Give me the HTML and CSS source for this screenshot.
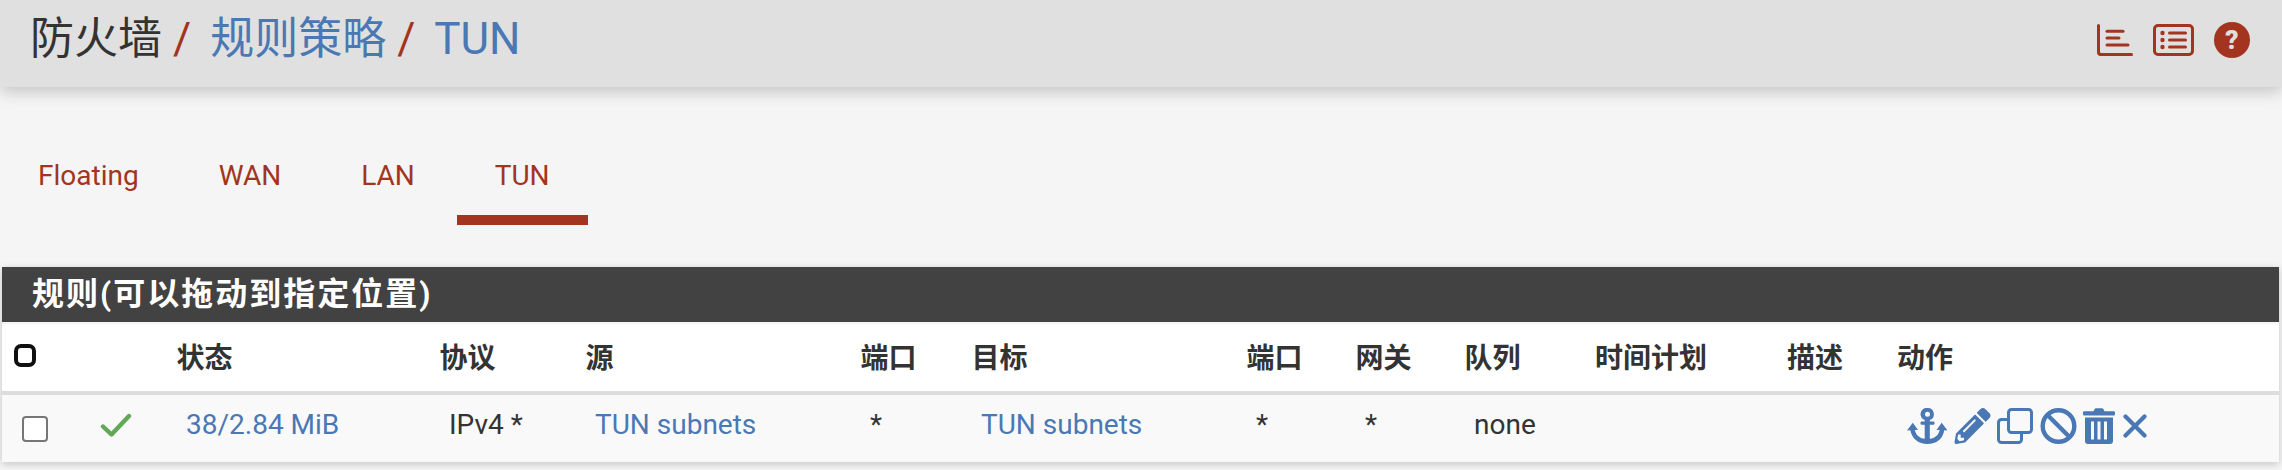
FILE: index.html
```html
<!DOCTYPE html>
<html lang="zh-CN">
<head>
<meta charset="utf-8">
<title>防火墙 / 规则策略 / TUN</title>
<link rel="stylesheet" href="styles.css">
</head>
<body>
<header class="topbar">
  <ol class="crumbs">
    <li class="crumb">防火墙<span class="sep">/</span></li>
    <li class="crumb"><a href="#">规则策略</a><span class="sep">/</span></li>
    <li class="crumb"><a href="#">TUN</a></li>
  </ol>
  <div class="tools">
    <svg class="tool-chart" viewBox="0 0 36 32"><g fill="none" stroke="#a23420" stroke-width="3" stroke-linecap="round"><path d="M1.500 1.500V28a2.600 2.600 0 0 0 2.600 2.600H34.500"/><path d="M10 7.300H26"/><path d="M10 14H22"/><path d="M10 21H31"/></g></svg>
    <svg class="tool-list" viewBox="0 0 41 32"><rect x="1.500" y="1.500" width="38" height="29" rx="3.500" fill="none" stroke="#a23420" stroke-width="3"/><g fill="#a23420"><circle cx="9.500" cy="9" r="2.200"/><circle cx="9.500" cy="16" r="2.200"/><circle cx="9.500" cy="23" r="2.200"/><rect x="15" y="7.500" width="19" height="3" rx="1.500"/><rect x="15" y="14.500" width="19" height="3" rx="1.500"/><rect x="15" y="21.500" width="19" height="3" rx="1.500"/></g></svg>
    <span class="tool-help">?</span>
  </div>
</header>

<nav class="tabs">
  <a class="tab" href="#">Floating</a>
  <a class="tab" href="#">WAN</a>
  <a class="tab" href="#">LAN</a>
  <a class="tab active" href="#">TUN</a>
</nav>

<section class="panel">
  <h2 class="panel-title">规则(可以拖动到指定位置)</h2>
  <table class="rules">
    <colgroup>
      <col class="c1"><col class="c2"><col class="c3"><col class="c4"><col class="c5"><col class="c6"><col class="c7"><col class="c8"><col class="c9"><col class="c10"><col class="c11"><col class="c12"><col class="c13">
    </colgroup>
    <thead>
      <tr>
        <th class="check-head"><input class="check check-focus" type="checkbox" aria-label="全选"></th>
        <th></th>
        <th>状态</th>
        <th>协议</th>
        <th>源</th>
        <th>端口</th>
        <th>目标</th>
        <th>端口</th>
        <th>网关</th>
        <th>队列</th>
        <th>时间计划</th>
        <th>描述</th>
        <th>动作</th>
      </tr>
    </thead>
    <tbody>
      <tr>
        <td><input class="check" type="checkbox" aria-label="选择"></td>
        <td><svg class="ok" viewBox="0 0 32 24"><path d="M3 13.500 11.500 21.500 29 3" fill="none" stroke="#62a857" stroke-width="4.400" stroke-linecap="round" stroke-linejoin="round"/></svg></td>
        <td><a href="#">38/2.84 MiB</a></td>
        <td>IPv4 *</td>
        <td><a href="#">TUN subnets</a></td>
        <td>*</td>
        <td><a href="#">TUN subnets</a></td>
        <td>*</td>
        <td>*</td>
        <td>none</td>
        <td></td>
        <td></td>
        <td class="actions-cell">
          <div class="actions">
          <svg class="a-anchor" viewBox="0 0 41 36"><g fill="#4a78b5"><path d="M20.500 0a6.200 6.200 0 0 1 2.300 12V30.800c5.300-.6 8.700-3.600 9.900-8.800l-3.200 0 5.200-7.200 5.800 7.800-3.300-.3C36 31 29.500 36 20.500 36S5 31 3.300 22.300L0 22.600l5.800-7.800 5.200 7.200-3.200 0c1.200 5.200 4.600 8.200 9.900 8.800V12A6.200 6.200 0 0 1 20.500 0zm0 3.700a2.500 2.500 0 1 0 0 5 2.500 2.500 0 0 0 0-5z"/><rect x="13.500" y="13.500" width="14" height="3.200" rx="1.200"/></g></svg>
          <svg class="a-pencil" viewBox="0 0 512 512"><path fill="#4a78b5" d="M497.900 142.100l-46.100 46.100c-4.700 4.700-12.300 4.700-17 0l-111-111c-4.700-4.700-4.700-12.300 0-17l46.100-46.100c18.700-18.700 49.100-18.700 67.900 0l60.100 60.100c18.800 18.700 18.800 49.100 0 67.900zM284.200 99.800L21.600 362.400.4 483.900c-2.900 16.400 11.400 30.600 27.800 27.800l121.500-21.300 262.600-262.600c4.700-4.700 4.700-12.300 0-17l-111-111c-4.800-4.700-12.400-4.700-17.100 0zM124.100 339.900c-5.500-5.500-5.500-14.300 0-19.800l154-154c5.500-5.500 14.300-5.500 19.800 0s5.500 14.300 0 19.800l-154 154c-5.500 5.500-14.300 5.500-19.800 0zM88 424h48v36.300l-64.500 11.300-31.100-31.100L51.700 376H88v48z"/></svg>
          <svg class="a-copy" viewBox="0 0 36 36"><g fill="none" stroke="#4a78b5" stroke-width="3"><rect x="11.500" y="1.500" width="23" height="23" rx="3"/><path d="M11.500 11.500H4.500a3 3 0 0 0-3 3V31.500a3 3 0 0 0 3 3H21.500a3 3 0 0 0 3-3V24.500"/></g></svg>
          <svg class="a-ban" viewBox="0 0 36 36"><g fill="none" stroke="#4a78b5" stroke-width="4.400"><circle cx="18" cy="18" r="15.800"/><path d="M7 7 29 29"/></g></svg>
          <svg class="a-trash" viewBox="0 0 32 36"><path fill="#4a78b5" fill-rule="evenodd" d="M1.200 3.200H10.500L11.500 1.200Q12 .3 13 .3H19Q20 .3 20.500 1.200L21.500 3.200H30.800Q32 3.200 32 4.400V6.200Q32 7.400 30.800 7.400H1.200Q0 7.400 0 6.200V4.400Q0 3.200 1.200 3.200ZM2 9.500H30V33Q30 36 27 36H5Q2 36 2 33ZM8 13.500V31.500H11V13.500ZM14.500 13.500V31.500H17.500V13.500ZM21 13.500V31.500H24V13.500Z"/></svg>
          <svg class="a-x" viewBox="0 0 24 24"><path d="M2.500 2.500 21.500 21.500M21.500 2.500 2.500 21.500" fill="none" stroke="#4a78b5" stroke-width="4.200" stroke-linecap="round"/></svg>
          </div>
        </td>
      </tr>
    </tbody>
  </table>
</section>
</body>
</html>
```
FILE: styles.css
```css
* { box-sizing: border-box; }
html, body { margin: 0; padding: 0; }
body {
  height: 470px;
  overflow: hidden;
  background: #f5f5f5;
  color: #333;
  font-family: Roboto, "Noto Sans CJK SC", sans-serif;
  font-size: 28px;
}
a { color: #4a78b5; text-decoration: none; }

.topbar {
  height: 87px;
  background: #e0e0e0;
  box-shadow: 0 4px 16px rgba(0, 0, 0, .22);
  display: flex;
  justify-content: space-between;
  align-items: center;
  padding: 0 32px 0 30px;
}
.crumbs {
  list-style: none;
  margin: 0;
  padding: 0 0 9px;
  display: flex;
  font-size: 44px;
  line-height: 54px;
}
.crumb { display: flex; }
.sep { color: #a23420; margin: 0 19px 0 11px; }
.tools { display: flex; align-items: center; padding-bottom: 8px; }
.tool-chart { width: 36px; height: 32px; margin-right: 20px; }
.tool-list { width: 41px; height: 32px; margin-right: 20px; }
.tool-help {
  width: 36px;
  height: 36px;
  border-radius: 50%;
  background: #a23420;
  color: #e0e0e0;
  font-weight: 900;
  font-size: 26px;
  line-height: 36px;
  text-align: center;
}

.tabs { display: flex; gap: 4px; margin-top: 69px; }
.tab {
  padding: 0 38px 19px;
  line-height: 40px;
  color: #a23420;
  border-bottom: 10px solid transparent;
}
.tab.active { border-bottom-color: #a23420; }

.panel {
  margin: 42px 3px 0 2px;
  box-shadow: 0 2px 8px rgba(0, 0, 0, .2);
}
.panel-title {
  margin: 0 0 2px;
  height: 55px;
  padding: 0 30px;
  background: #424242;
  color: #fff;
  font-size: 32px;
  font-weight: 700;
  letter-spacing: 2px;
  line-height: 54px;
}
.rules {
  width: 100%;
  height: 138px;
  table-layout: fixed;
  border-collapse: collapse;
}
.c1 { width: 69px; }
.c2 { width: 97.500px; }
.c3 { width: 263px; }
.c4 { width: 146px; }
.c5 { width: 275px; }
.c6 { width: 111px; }
.c7 { width: 275px; }
.c8 { width: 109px; }
.c9 { width: 109px; }
.c10 { width: 130.500px; }
.c11 { width: 192px; }
.c12 { width: 110px; }
.c13 { width: auto; }

.rules th {
  height: 69px;
  padding: 3px 8px 0;
  background: #fff;
  border-bottom: 4px solid #ddd;
  text-align: left;
  font-weight: 700;
  line-height: 40px;
  white-space: nowrap;
}
.rules th.check-head { padding: 0 8px 4px 12px; }
.rules td {
  height: 69px;
  padding: 0 0 8px 17.500px;
  background: #f9f9f9;
  line-height: 40px;
  white-space: nowrap;
}
.rules td:first-child { padding-left: 16px; padding-bottom: 0; }
.rules td.actions-cell { padding: 0 0 0 18px; }
.check {
  appearance: none;
  display: block;
  width: 26px;
  height: 26px;
  margin: 0 0 0 4px;
  background: #fff;
  border: 2px solid #767676;
  border-radius: 4px;
}
.rules .check-focus {
  width: 22px;
  height: 23px;
  margin: 0;
  border: 4px solid #101010;
  border-radius: 7px;
}
.ok { display: block; width: 32px; height: 24px; margin-left: 11px; }
.actions { display: flex; align-items: center; height: 36px; margin-bottom: 6px; }
.actions svg { display: block; height: 36px; margin-right: 6px; }
.a-anchor { width: 41px; }
.a-pencil { width: 37px; }
.a-copy { width: 36px; margin-right: 7px !important; }
.a-ban { width: 37px; }
.a-trash { width: 32px; margin-right: 8px !important; }
.actions .a-x { width: 24px; height: 24px; margin-right: 0; }
```
